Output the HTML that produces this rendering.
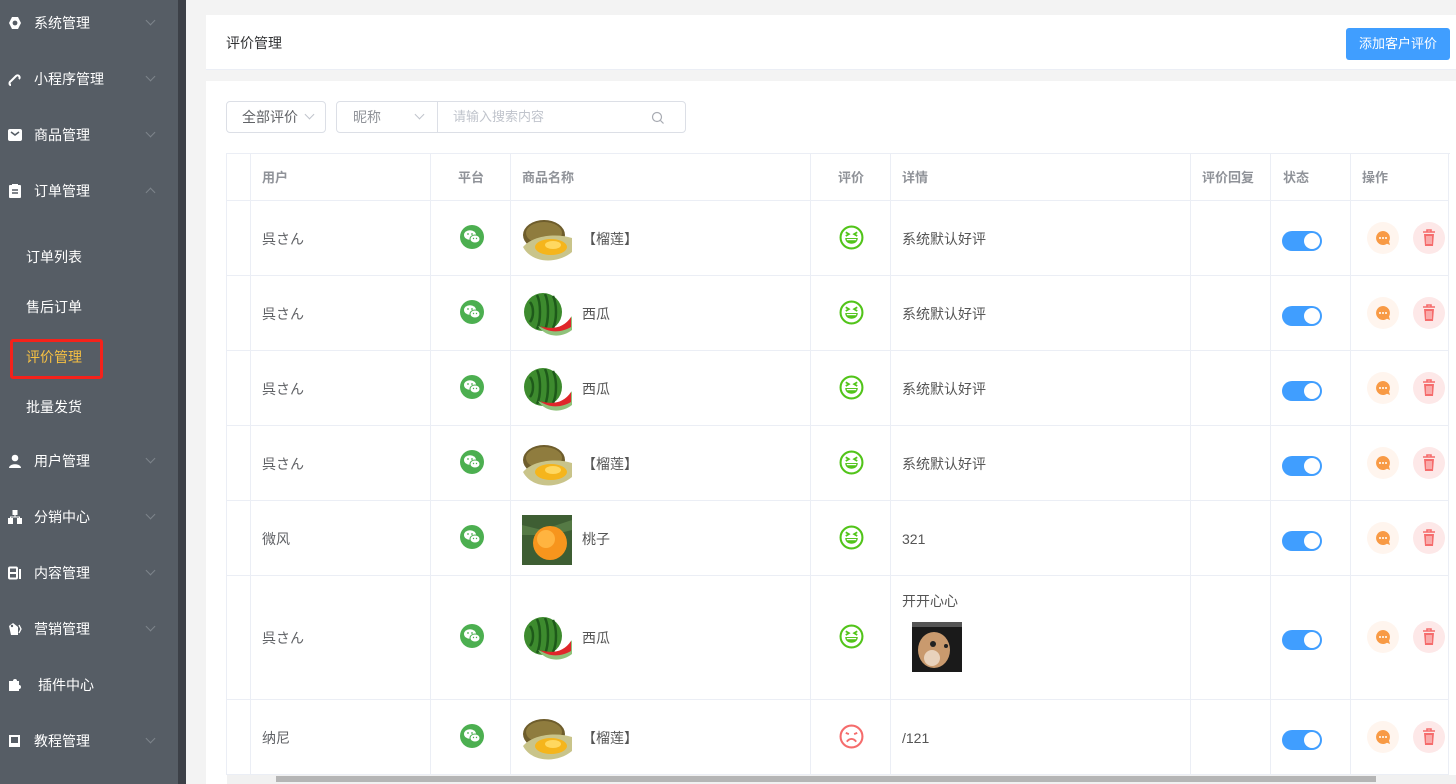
<!DOCTYPE html>
<html><head><meta charset="utf-8"><style>
*{margin:0;padding:0;box-sizing:border-box}
body{width:1456px;height:784px;overflow:hidden;background:#f3f3f3;font-family:"Liberation Sans","Noto Sans CJK SC",sans-serif;font-size:14px;color:#606266;position:relative}
.sb{position:absolute;left:0;top:0;width:178px;height:784px;background:#565d65}
.sb2{position:absolute;left:178px;top:0;width:8px;height:784px;background:#3c4047}
.mi{position:absolute;left:0;width:178px;height:20px;color:#fff;font-size:14px}
.mi .ic{position:absolute;left:8px;top:3px;width:14px;height:14px}
.mi .t{position:absolute;left:34px;top:0;line-height:20px}
.mi .ar{position:absolute;left:147px;top:4px;width:7px;height:7px;border-right:1px solid #7d848b;border-bottom:1px solid #7d848b;transform:rotate(45deg)}
.mi .ar.up{transform:rotate(-135deg);top:8px}
.sub{position:absolute;left:26px;color:#fff;font-size:14px;line-height:20px}
.card{position:absolute;background:#fff}
.cell{position:absolute;border-right:1px solid #ebeef5;border-bottom:1px solid #ebeef5}
.hd{font-weight:bold;color:#909399}
.txt{position:absolute;line-height:20px}
</style></head><body>
<div class="sb"></div><div class="sb2"></div>

<div class="mi" style="top:13px"><svg class="ic" viewBox="0 0 14 14"><path d="M4 1h6l3 6-3 6H4L1 7z" fill="#fff"/><circle cx="7" cy="7" r="2.4" fill="#565d65"/></svg><span class="t">系统管理</span><i class="ar"></i></div>
<div class="mi" style="top:69px"><svg class="ic" viewBox="0 0 14 14"><path d="M3 13c-2 0-2-3 0-4l5-5c2-2 5 1 3 3" fill="none" stroke="#fff" stroke-width="2"/></svg><span class="t">小程序管理</span><i class="ar"></i></div>
<div class="mi" style="top:125px"><svg class="ic" viewBox="0 0 14 14"><rect x="0" y="1" width="14" height="12" rx="2" fill="#fff"/><path d="M3 4l4 3 4-3" stroke="#565d65" stroke-width="1.6" fill="none"/></svg><span class="t">商品管理</span><i class="ar"></i></div>
<div class="mi" style="top:181px"><svg class="ic" viewBox="0 0 14 14"><rect x="1" y="1" width="12" height="13" rx="1" fill="#fff"/><rect x="4" y="0" width="6" height="2" fill="#fff"/><path d="M4 6h6M4 9h6" stroke="#565d65" stroke-width="1.5"/></svg><span class="t">订单管理</span><i class="ar up"></i></div>
<div class="sub" style="top:247px">订单列表</div>
<div class="sub" style="top:297px">售后订单</div>
<div style="position:absolute;left:10px;top:339px;width:93px;height:40px;border:3px solid #f5221b;border-radius:3px"></div>
<div class="sub" style="top:347px;color:#f6c042">评价管理</div>
<div class="sub" style="top:397px">批量发货</div>
<div class="mi" style="top:451px"><svg class="ic" viewBox="0 0 14 14"><circle cx="7" cy="4" r="3.3" fill="#fff"/><path d="M1 14c0-5 12-5 12 0z" fill="#fff"/></svg><span class="t">用户管理</span><i class="ar"></i></div>
<div class="mi" style="top:507px"><svg class="ic" viewBox="0 0 14 14"><rect x="4.5" y="0" width="5" height="5" fill="#fff"/><rect x="0" y="8" width="5" height="6" fill="#fff"/><rect x="9" y="8" width="5" height="6" fill="#fff"/><path d="M7 5v2H2.5v1M7 7h4.5v1" stroke="#fff" fill="none"/></svg><span class="t">分销中心</span><i class="ar"></i></div>
<div class="mi" style="top:563px"><svg class="ic" viewBox="0 0 14 14"><rect x="1" y="1.5" width="8" height="11" rx="1" fill="none" stroke="#fff" stroke-width="2"/><path d="M1 7h8" stroke="#fff" stroke-width="2"/><rect x="11" y="3" width="2" height="10" fill="#fff"/></svg><span class="t">内容管理</span><i class="ar"></i></div>
<div class="mi" style="top:619px"><svg class="ic" viewBox="0 0 14 14"><path d="M1 4l4-3 5 4v8H3z" fill="#fff"/><circle cx="4" cy="4" r="1.2" fill="#565d65"/><path d="M11 3l2 4-2 4" stroke="#fff" fill="none" stroke-width="1.3"/></svg><span class="t">营销管理</span><i class="ar"></i></div>
<div class="mi" style="top:675px"><svg class="ic" viewBox="0 0 14 14"><path d="M1 3h4a2 2 0 1 1 4 0h2v4a2 2 0 1 1 0 4v2H1z" fill="#fff"/></svg><span class="t" style="left:38px">插件中心</span></div>
<div class="mi" style="top:731px"><svg class="ic" viewBox="0 0 14 14"><rect x="1" y="1" width="11" height="12" fill="#fff"/><rect x="3" y="3" width="7" height="6" fill="#565d65"/></svg><span class="t">教程管理</span><i class="ar"></i></div>

<div class="card" style="left:206px;top:15px;width:1250px;height:55px;border-bottom:1px solid #ebeef5"><span class="txt" style="left:20px;top:18px;color:#303133;font-size:14px">评价管理</span>
<div style="position:absolute;left:1140px;top:13px;width:104px;height:32px;background:#409eff;border-radius:3px;color:#fff;font-size:13px;line-height:32px;text-align:center">添加客户评价</div></div>

<div class="card" style="left:206px;top:81px;width:1250px;height:703px"></div>
<div style="position:absolute;left:226px;top:101px;width:100px;height:32px;border:1px solid #dcdfe6;border-radius:4px;background:#fff"><span class="txt" style="left:15px;top:5px;font-size:14px">全部评价</span><i style="position:absolute;left:79px;top:9px;width:7px;height:7px;border-right:1px solid #c0c4cc;border-bottom:1px solid #c0c4cc;transform:rotate(45deg)"></i></div>
<div style="position:absolute;left:336px;top:101px;width:350px;height:32px;border:1px solid #dcdfe6;border-radius:4px;background:#fff">
<span class="txt" style="left:16px;top:5px;color:#909399">昵称</span><i style="position:absolute;left:79px;top:9px;width:7px;height:7px;border-right:1px solid #c0c4cc;border-bottom:1px solid #c0c4cc;transform:rotate(45deg)"></i>
<div style="position:absolute;left:100px;top:0;width:1px;height:30px;background:#dcdfe6"></div>
<span class="txt" style="left:116px;top:5px;color:#c0c4cc;font-size:13px">请输入搜索内容</span>
<svg style="position:absolute;left:314px;top:9px" width="14" height="14" viewBox="0 0 14 14"><circle cx="6" cy="6" r="4.5" fill="none" stroke="#a8abb2" stroke-width="1.2"/><path d="M9.5 9.5l3 3" stroke="#a8abb2" stroke-width="1.2"/></svg></div>

<div style="position:absolute;left:226px;top:153px;width:1224px;height:1px;background:#ebeef5"></div>
<div style="position:absolute;left:226px;top:153px;width:1px;height:622px;background:#ebeef5"></div>
<div id="tbl"></div>
<div style="position:absolute;left:227px;top:775px;width:1229px;height:9px;background:#f1f1f1"></div>
<div style="position:absolute;left:276px;top:776px;width:1100px;height:6px;background:#b5b5b5"></div>

<svg width="0" height="0" style="position:absolute"><defs>
<g id="wx"><circle cx="12" cy="12" r="12" fill="#4caf50"/><ellipse cx="10" cy="10" rx="6" ry="4.8" fill="#fff"/><ellipse cx="15" cy="14" rx="5" ry="4" fill="#fff" stroke="#4caf50" stroke-width="1"/><circle cx="8" cy="9" r=".9" fill="#4caf50"/><circle cx="12" cy="9" r=".9" fill="#4caf50"/><circle cx="13.5" cy="13.5" r=".7" fill="#4caf50"/><circle cx="16.5" cy="13.5" r=".7" fill="#4caf50"/></g>
<g id="happy"><circle cx="12" cy="12" r="10.5" fill="none" stroke="#52c41a" stroke-width="2"/><path d="M6.5 7l3 1.8-3 1.8M17.5 7l-3 1.8 3 1.8" fill="none" stroke="#52c41a" stroke-width="1.7"/><path d="M6 12.5h12c0 4-3 5.5-6 5.5s-6-1.5-6-5.5z" fill="#52c41a"/><path d="M7.5 14h9" stroke="#fff" stroke-width="1.2"/></g>
<g id="sad"><circle cx="12" cy="12" r="10.5" fill="none" stroke="#f56c6c" stroke-width="2"/><path d="M6.5 8.5l3 1.2M17.5 8.5l-3 1.2" stroke="#f56c6c" stroke-width="1.8"/><path d="M7.5 17c2.5-3.5 6.5-3.5 9 0" fill="none" stroke="#f56c6c" stroke-width="1.8"/></g>
<g id="durian"><rect width="50" height="50" fill="#fff"/><ellipse cx="22" cy="20" rx="21" ry="15" fill="#6e5d2c"/><ellipse cx="22" cy="18" rx="18" ry="11" fill="#8f7c3e"/><path d="M1 32c10-12 34-14 49-9v14c-14 12-40 12-49-5z" fill="#c9c48a"/><ellipse cx="29" cy="32" rx="16" ry="8" fill="#f5b51c"/><ellipse cx="31" cy="30" rx="8" ry="4" fill="#ffd860"/></g>
<g id="melon"><rect width="50" height="50" fill="#fff"/><circle cx="21" cy="22" r="19" fill="#3d8b2e"/><path d="M8 12c4 5 4 15 0 20M15 5c4 8 4 26 0 34M23 4c4 8 4 26 0 36M31 6c4 8 4 24 0 32" stroke="#1e5a1a" stroke-width="2.5" fill="none"/><path d="M16 36c12 6 26 4 34-10v14c-10 8-26 8-34-4z" fill="#8fc27a"/><path d="M18 36c12 4 24 2 31-9v10c-10 6-23 6-31-1z" fill="#e0262a"/></g>
<g id="peach"><rect width="50" height="50" fill="#3e5e33"/><path d="M0 10l20 5 30-10v10L30 20 0 20z" fill="#557a45"/><circle cx="28" cy="28" r="17" fill="#f7951d"/><circle cx="24" cy="24" r="9" fill="#ffb440"/></g>
</defs></svg>

<script>
var cols=[227,251,431,511,811,891,1191,1271,1351,1449];
var rows=[[201,276],[276,351],[351,426],[426,501],[501,576],[576,700],[700,775]];
var data=[["呉さん","durian","【榴莲】",1,"系统默认好评"],["呉さん","melon","西瓜",1,"系统默认好评"],["呉さん","melon","西瓜",1,"系统默认好评"],["呉さん","durian","【榴莲】",1,"系统默认好评"],["微风","peach","桃子",1,"321"],["呉さん","melon","西瓜",1,"开开心心"],["纳尼","durian","【榴莲】",0,"/121"]];
var h="";
function cell(x1,x2,y1,y2){h+='<div class="cell" style="left:'+x1+'px;top:'+y1+'px;width:'+(x2-x1)+'px;height:'+(y2-y1)+'px"></div>';}
for(var i=0;i<9;i++)cell(cols[i],cols[i+1],153,201);
var hds=[["用户",262],["平台",458],["商品名称",522],["评价",838],["详情",902],["评价回复",1202],["状态",1283],["操作",1362]];
hds.forEach(function(d){h+='<span class="txt hd" style="left:'+d[1]+'px;top:168px;font-size:13px">'+d[0]+'</span>';});
rows.forEach(function(r,k){
 for(var i=0;i<9;i++)cell(cols[i],cols[i+1],r[0],r[1]);
 var c=(r[0]+r[1])/2, d=data[k];
 h+='<span class="txt" style="left:262px;top:'+(c-10)+'px">'+d[0]+'</span>';
 h+='<svg style="position:absolute;left:460px;top:'+(c-14)+'px" width="24" height="24"><use href="#wx"/></svg>';
 h+='<svg style="position:absolute;left:522px;top:'+(c-24)+'px" width="50" height="50" viewBox="0 0 50 50"><use href="#'+d[1]+'"/></svg>';
 h+='<span class="txt" style="left:582px;top:'+(c-10)+'px;color:#555">'+d[2]+'</span>';
 h+='<svg style="position:absolute;left:839px;top:'+(c-14)+'px" width="25" height="25" viewBox="0 0 24 24"><use href="#'+(d[3]?"happy":"sad")+'"/></svg>';
 if(k==5){h+='<span class="txt" style="left:902px;top:591px;color:#555">开开心心</span>';
  h+='<svg style="position:absolute;left:912px;top:622px" width="50" height="50"><rect width="50" height="50" fill="#1a1a1a"/><ellipse cx="22" cy="28" rx="16" ry="18" fill="#c99a6e"/><ellipse cx="20" cy="36" rx="8" ry="8" fill="#e8d2bc"/><circle cx="21" cy="22" r="3" fill="#222"/><circle cx="34" cy="24" r="2" fill="#222"/><rect y="0" width="50" height="5" fill="#555"/></svg>';}
 else h+='<span class="txt" style="left:902px;top:'+(c-10)+'px;color:#555">'+d[4]+'</span>';
 h+='<div style="position:absolute;left:1282px;top:'+(c-8)+'px;width:40px;height:20px;border-radius:10px;background:#409eff"><div style="position:absolute;left:22px;top:2px;width:16px;height:16px;border-radius:50%;background:#fff"></div></div>';
 h+='<div style="position:absolute;left:1367px;top:'+(c-17)+'px;width:32px;height:32px;border-radius:50%;background:#fff5ee"><svg style="position:absolute;left:8px;top:8px" width="16" height="16" viewBox="0 0 16 16"><path d="M8 1a7 7 0 1 0 4 12.8L15 15l-1-3.5A7 7 0 0 0 8 1z" fill="#f89a45"/><circle cx="5" cy="8" r="1" fill="#fff"/><circle cx="8" cy="8" r="1" fill="#fff"/><circle cx="11" cy="8" r="1" fill="#fff"/></svg></div>';
 h+='<div style="position:absolute;left:1413px;top:'+(c-17)+'px;width:32px;height:32px;border-radius:50%;background:#fde8e8"><svg style="position:absolute;left:8px;top:7px" width="16" height="18" viewBox="0 0 16 18"><path d="M2 3h12M6 3V1h4v2" stroke="#f56c6c" stroke-width="1.6" fill="none"/><path d="M3 5h10l-1 12H4z" fill="#f56c6c"/><path d="M6 7v8M8 7v8M10 7v8" stroke="#fde8e8" stroke-width="1"/></svg></div>';
});
document.getElementById("tbl").innerHTML=h;
</script>
</body></html>
